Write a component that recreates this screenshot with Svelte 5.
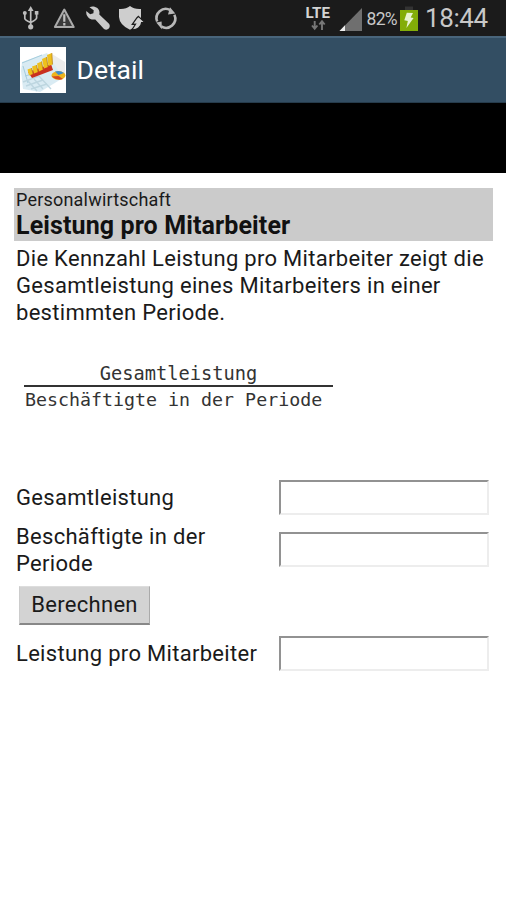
<script>
  let output = $state('');
  let performance = $state('');
  let employees = $state('');
  function calculate() {
    const n = parseFloat(employees);
    output = n ? String(parseFloat(performance) / n) : '';
  }
</script>

<div class="screen">
  <div class="status">
    <svg class="icons" width="190" height="36" viewBox="0 0 190 36" fill="none" stroke="#bdbdbd">
      <g stroke-width="1.7">
        <path d="M30.7 26V10M24.8 14V18.5Q24.8 20 30.7 22.5M36.6 13V18Q36.6 19.5 30.7 22.5" />
        <path d="M30.7 6L33.6 11H27.8Z" fill="#bdbdbd" stroke="none" />
        <circle cx="30.7" cy="26.8" r="2.6" fill="#bdbdbd" stroke="none" />
        <circle cx="24.8" cy="13" r="2" fill="#bdbdbd" stroke="none" />
        <path d="M34.8 11h3.6v3.6h-3.6z" fill="#bdbdbd" stroke="none" />
      </g>
      <path d="M64.3 9.6L73.7 27H54.9Z" stroke="#aaa" stroke-width="2" stroke-linejoin="round" fill="#3a3a3a" />
      <path d="M64.3 14.2v7.5M64.3 23v2.4" stroke="#c0c0c0" stroke-width="2.2" />
      <path d="M89.5 7.2C93.5 5.2 99.5 7.5 99.5 12.5L99.3 14.6L109 23.8C111.5 27 107.5 31.5 104 28.9L95.3 19.4C90 20.5 85.5 16.5 86.3 11L90.2 14.2L93.4 13.2L93.7 10.2Z" fill="#c9c9c9" stroke="none" />
      <path d="M119 9Q126 9.5 130 6Q134 9.5 141 9V17.5Q140 25 130 29.8Q119.5 25 119 17Z" fill="#cecece" stroke="none" />
      <path d="M138.4 16.4L145 22.6H141.6C141.2 27.3 137 30 132 29.8L135.5 24.2L132.3 24.4L136.8 18Z" fill="#d2d2d2" stroke="#1c1c1c" stroke-width="1.2" />
      <g stroke="#b8b8b8" stroke-width="2.6">
        <path d="M157.2 21.5A9.2 9.2 0 0 1 170.3 10.1M174.4 14.8A9.2 9.2 0 0 1 161.2 26.4" />
        <path d="M170 7.3L175.3 13.6L168 14.4ZM161.6 21.6L156.2 22.6L161.9 29.2Z" fill="#b8b8b8" stroke="none" />
      </g>
    </svg>
    <svg class="signal" width="60" height="36" viewBox="302 0 60 36">
      <text x="305.6" y="17.5" textLength="24.4" lengthAdjust="spacingAndGlyphs" class="lte">LTE</text>
      <path d="M314.7 21V28M312 25.5L314.7 28.7L317.4 25.5M322 30V22M319.3 24.5L322 21.3L324.7 24.5" fill="none" stroke="#777" stroke-width="1.9" />
      <path d="M339.5 31L362 8V31Z" fill="#6f6f6f" />
      <path d="M339.5 31L345 25.3V31Z" fill="#eee" />
    </svg>
    <span class="percent">82%</span>
    <svg class="battery" width="18" height="36" viewBox="0 0 18 36">
      <path d="M5 6.5h8v4H5z" fill="#333" />
      <path d="M0 10h18v21H0z" fill="#83ad08" />
      <path d="M6.8 12.8L13 13L10.7 17.5L13.6 18L6.4 28L7.8 21L4.3 20.3Z" fill="#e8f3d2" />
    </svg>
    <span class="clock">18:44</span>
  </div>

  <header>
    <svg width="46" height="46" viewBox="0 0 46 46">
      <path d="M0 0h46v46H0z" fill="#fff" />
      <path d="M32 7L45 15V27L31 20Z" fill="#ececec" />
      <path d="M2 15L27 6L43 31L20 45L3 42L1 24Z" fill="#d9ebf3" />
      <path d="M2 16L22 8M3 19L8 36M5 29L12 27" stroke="#a5cddd" stroke-width="1" fill="none" />
      <path d="M3 35L19 29L31 42M6 39L23 33M11 42L27 37M8 34L17 44M14 32L23 42" stroke="#bdd6e0" stroke-width="1.4" fill="none" />
      <path d="M8 25L31 17L33 23L12 31Z" fill="#c9301f" />
      <path d="M7.5 22.5L11.5 21L13 27L9 28.5ZM12 19.5L16.5 18L18 25L14 26.5ZM17 16.5L21.5 14.5L23 22.5L19 24.5ZM22 12L26.5 10L28 20L24 21.5ZM27 8L31.8 6L32.5 17.5L28.5 19Z" fill="#efc01d" />
      <path d="M11.5 21L13 27M16.5 18L18 25M21.5 14.5L23 22.5M26.5 10L28 20M31.8 6L32.5 17.5" stroke="#bd8418" stroke-width="0.8" />
      <ellipse cx="38.5" cy="28.5" rx="7" ry="4.2" fill="#edb51d" />
      <path d="M38.5 28L35 24.5Q40 23 44 26Z" fill="#3f8ecb" />
      <path d="M38.5 29L43 32Q38 34.5 31.5 29.5Z" fill="#d6491d" />
    </svg>
    <h1>Detail</h1>
  </header>
  <div class="banner"></div>

  <main>
    <section class="title">
      <div class="category">Personalwirtschaft</div>
      <h2>Leistung pro Mitarbeiter</h2>
    </section>
    <p>
      Die Kennzahl Leistung pro Mitarbeiter zeigt die<br />
      Gesamtleistung eines Mitarbeiters in einer<br />
      bestimmten Periode.
    </p>
    <div class="formula">
      <div class="top">Gesamtleistung</div>
      <div class="bottom">Beschäftigte in der Periode</div>
    </div>
    <div class="row first">
      <label for="a">Gesamtleistung</label><input id="a" bind:value={performance} />
    </div>
    <div class="row second">
      <label for="b">Beschäftigte in der<br />Periode</label><input id="b" bind:value={employees} />
    </div>
    <button onclick={calculate}>Berechnen</button>
    <div class="row third">
      <label for="c">Leistung pro Mitarbeiter</label><input id="c" readonly value={output} />
    </div>
  </main>
</div>

<style>
  .screen {
    width: 506px;
    height: 900px;
    overflow: hidden;
    background: #fff;
    color: #1a1a1a;
    font-family: Roboto, sans-serif;
  }
  .status {
    display: flex;
    height: 36px;
    background: #1b1b1b;
    color: #c8c8c8;
    line-height: 36px;
    white-space: nowrap;
  }
  svg { display: block; flex: none; }
  .signal { margin-left: 112px; }
  .lte { font: 700 14.5px Roboto, sans-serif; fill: #d4d4d4; }
  .percent { width: 33px; margin-left: 4.5px; font-size: 17.5px; letter-spacing: -0.7px; line-height: 38px; }
  .battery { margin-left: 0.5px; }
  .clock { margin-left: 7px; font-size: 26px; letter-spacing: -0.4px; }
  header {
    display: flex;
    align-items: center;
    box-sizing: border-box;
    height: 67px;
    padding-left: 20px;
    border-top: 2px solid #49657b;
    border-bottom: 1px solid #263b4b;
    background: #334e63;
  }
  h1 { margin: 0 0 0 10.5px; color: #fff; font-size: 26.5px; font-weight: 400; line-height: 40px; }
  .banner { height: 70px; background: #000; }
  main { padding: 15px 13px 0 14px; }
  .title { box-sizing: border-box; height: 53px; padding: 1px 2px; background: #cbcbcb; }
  .category { height: 22px; font-size: 18px; line-height: 22px; letter-spacing: 0.2px; }
  h2 { margin: 0; color: #111; font-size: 25px; font-weight: 700; line-height: 29px; letter-spacing: 0.12px; }
  p { margin: 4px 0 0 2px; font-size: 22px; line-height: 27px; letter-spacing: 0.3px; white-space: nowrap; }
  .formula { width: 309px; margin: 34px 0 0 10px; font-family: "DejaVu Sans Mono", monospace; font-size: 18.3px; line-height: 28px; color: #333; white-space: nowrap; }
  .top { height: 25px; border-bottom: 2px solid #333; font-size: 18.7px; text-align: center; }
  .bottom { height: 28px; padding-left: 1px; line-height: 26px; }
  .row { display: flex; align-items: center; justify-content: space-between; padding: 0 4px 0 2px; font-size: 22px; line-height: 27px; letter-spacing: 0.3px; white-space: nowrap; }
  .first { height: 36px; margin-top: 64px; }
  .first label { padding-top: 1px; }
  .second { height: 54px; margin-top: 7px; }
  .second label { padding-top: 2px; }
  .third { height: 36px; margin-top: 10px; }
  input { box-sizing: border-box; width: 210px; height: 35px; margin: 0; padding: 2px; border: 2px solid; border-color: #929292 #ededed #ededed #929292; border-radius: 0; background: #fff; font: 22px Roboto, sans-serif; outline: none; }
  button { display: block; box-sizing: border-box; width: 131px; height: 39px; margin: 10px 0 0 5px; padding: 0; border: 1px solid; border-color: #ddd #aaa #888 #ccc; border-bottom-width: 2px; border-radius: 0; background: #d3d3d3; color: #1a1a1a; font: 22px/34px Roboto, sans-serif; letter-spacing: 0.3px; }
</style>
